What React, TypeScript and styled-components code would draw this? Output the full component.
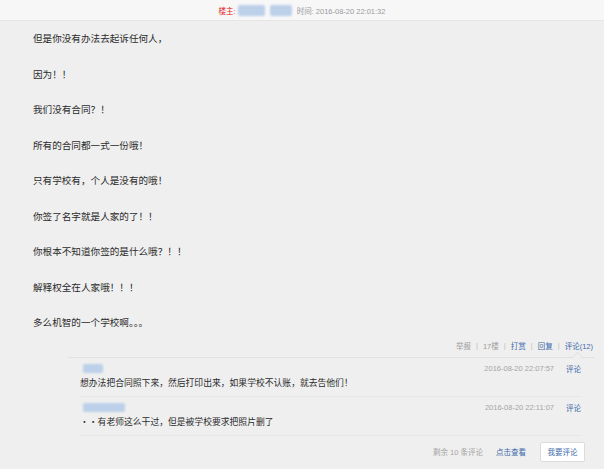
import React from 'react'
import styled, { createGlobalStyle } from 'styled-components'

const GlobalStyle = createGlobalStyle`
  html, body {
    margin: 0;
    padding: 0;
    background: #efefef;
    font-family: "Liberation Sans", "Noto Sans CJK SC", sans-serif;
    color: #2b2b2b;
  }
`

const Page = styled.div`
  width: 604px;
  height: 469px;
  overflow: hidden;
  background: #efefef;
`

const TopBar = styled.div`
  height: 20px;
  background: #f7f7f8;
  border-bottom: 1px solid #e6e6e6;
  display: flex;
  align-items: center;
  justify-content: center;
  font-size: 7.5px;
  color: #999;
`

const OwnerLabel = styled.span`
  color: #e02020;
  margin-right: 2px;
`

const Blur = styled.span<{ w: number; h?: number }>`
  display: inline-block;
  width: ${({ w }) => w}px;
  height: ${({ h }) => h || 9}px;
  background: #bcd0ea;
  filter: blur(1.2px);
  border-radius: 2px;
  margin-right: 5px;
`

const Post = styled.div`
  padding-left: 33px;
  font-size: 9.6px;
`

const Para = styled.div`
  line-height: 35.5px;
  height: 35.5px;
  white-space: nowrap;
`

const Actions = styled.div`
  display: flex;
  justify-content: flex-end;
  align-items: center;
  height: 10px;
  padding-right: 11px;
  font-size: 7.5px;
  color: #999;
`

const ActionLink = styled.span<{ blue?: boolean }>`
  color: ${({ blue }) => (blue ? '#3c69a8' : '#9a9a9a')};
`

const Sep = styled.span`
  color: #bbb;
  margin: 0 5px;
`

const CommentBox = styled.div`
  position: relative;
  margin: 6px 10px 0 68px;
  border-top: 1px solid #e0e0e0;
  padding: 0 13px 0 12px;

  &:before {
    content: '';
    position: absolute;
    top: -6px;
    right: 12px;
    width: 8px;
    height: 8px;
    background: #efefef;
    border-left: 1px solid #e0e0e0;
    border-top: 1px solid #e0e0e0;
    transform: rotate(45deg) scale(0.75, 0.75);
  }
`

const Comment = styled.div`
  padding: 5px 0 6px;
  border-bottom: 1px solid #e6e6e6;
`

const CommentHead = styled.div`
  display: flex;
  align-items: center;
  height: 12px;
  padding-left: 3px;
`

const Meta = styled.span`
  margin-left: auto;
  font-size: 7.5px;
  color: #a5a5a5;
`

const Reply = styled.span`
  font-size: 7.5px;
  color: #3c69a8;
  margin-left: 12px;
`

const CommentText = styled.div`
  font-size: 8.8px;
  line-height: 14px;
  margin-top: 1px;
  white-space: nowrap;
`

const Footer = styled.div`
  display: flex;
  justify-content: flex-end;
  align-items: center;
  height: 32px;
  font-size: 7.5px;
  color: #a5a5a5;
  margin-right: -4px;
`

const MoreLink = styled.span`
  color: #3c69a8;
  margin: 0 14px 0 13px;
`

const CommentButton = styled.button`
  width: 45px;
  height: 20px;
  padding: 0;
  background: #fff;
  border: 1px solid #dcdcdc;
  border-radius: 2px;
  font-family: inherit;
  font-size: 7.5px;
  color: #3c69a8;
`

const paragraphs = [
  '但是你没有办法去起诉任何人，',
  '因为！！',
  '我们没有合同？！',
  '所有的合同都一式一份哦！',
  '只有学校有，个人是没有的哦！',
  '你签了名字就是人家的了！！',
  '你根本不知道你签的是什么哦？！！',
  '解释权全在人家哦！！！',
  '多么机智的一个学校啊。。。',
]

const comments = [
  { nameWidth: 20, time: '2016-08-20 22:07:57', text: '想办法把合同照下来，然后打印出来，如果学校不认账，就去告他们！' },
  { nameWidth: 42, time: '2016-08-20 22:11:07', text: '・・有老师这么干过，但是被学校要求把照片删了' },
]

export default function App() {
  return (
    <Page>
      <GlobalStyle />
      <TopBar>
        <OwnerLabel>楼主:</OwnerLabel>
        <Blur w={27} h={11} />
        <Blur w={22} h={11} />
        <span>时间: 2016-08-20 22:01:32</span>
      </TopBar>
      <Post>
        {paragraphs.map((p) => (
          <Para key={p}>{p}</Para>
        ))}
      </Post>
      <Actions>
        <ActionLink>举报</ActionLink>
        <Sep>|</Sep>
        <ActionLink>17楼</ActionLink>
        <Sep>|</Sep>
        <ActionLink blue>打赏</ActionLink>
        <Sep>|</Sep>
        <ActionLink blue>回复</ActionLink>
        <Sep>|</Sep>
        <ActionLink blue>评论(12)</ActionLink>
      </Actions>
      <CommentBox>
        {comments.map((c) => (
          <Comment key={c.time}>
            <CommentHead>
              <Blur w={c.nameWidth} />
              <Meta>{c.time}</Meta>
              <Reply>评论</Reply>
            </CommentHead>
            <CommentText>{c.text}</CommentText>
          </Comment>
        ))}
        <Footer>
          <span>剩余 10 条评论</span>
          <MoreLink>点击查看</MoreLink>
          <CommentButton>我要评论</CommentButton>
        </Footer>
      </CommentBox>
    </Page>
  )
}
